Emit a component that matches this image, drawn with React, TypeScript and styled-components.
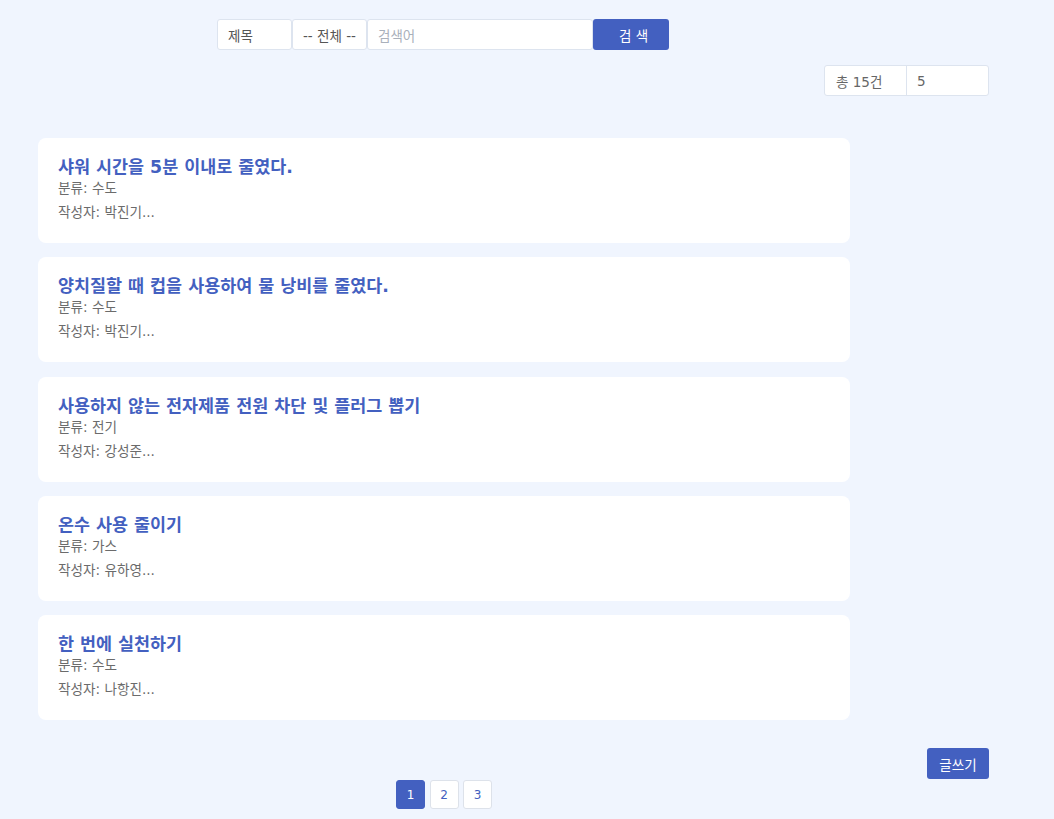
import React from "react";
import styled, { createGlobalStyle } from "styled-components";

const GlobalStyle = createGlobalStyle`
  html, body {
    margin: 0;
    padding: 0;
    background: #f0f5fe;
    font-family: "DejaVu Sans", "Noto Sans CJK KR", sans-serif;
  }
  * { box-sizing: border-box; }
`;

const BLUE = "#4360c0";

const Page = styled.div`
  width: 989px;
  padding: 19px 0 0 38px;
`;

const SearchRow = styled.form`
  width: 812px;
  padding-right: 2px;
  display: flex;
  justify-content: center;
`;

const Cell = styled.div<{ $w: number }>`
  width: ${(p) => p.$w}px;
  height: 31px;
  background: #fff;
  border: 1px solid #dde4ef;
  border-radius: 3px;
  display: flex;
  align-items: center;
  padding-left: 10px;
  font-size: 13.5px;
  color: #555;
`;

const Placeholder = styled.span`
  color: #a9b0bb;
`;

const SearchButton = styled.button`
  width: 76px;
  height: 31px;
  border: none;
  border-radius: 3px;
  background: ${BLUE};
  color: #fff;
  font-family: inherit;
  font-size: 13.5px;
  padding: 0 0 0 5px;
`;

const CountRow = styled.div`
  margin-top: 15px;
  display: flex;
  justify-content: flex-end;
`;

const CountBox = styled.div`
  display: flex;
  background: #fff;
  border: 1px solid #dde4ef;
  border-radius: 3px;
  height: 31px;
`;

const CountCell = styled.div<{ $w: number; $divider?: boolean }>`
  width: ${(p) => p.$w}px;
  display: flex;
  align-items: center;
  padding-left: ${(p) => (p.$divider ? 11 : 10)}px;
  font-size: 13.5px;
  color: #666;
  border-right: ${(p) => (p.$divider ? "1px solid #dde4ef" : "none")};
`;

const CardList = styled.div`
  margin-top: 42px;
  width: 812px;
  display: flex;
  flex-direction: column;
  gap: 14.25px;
`;

const Card = styled.div`
  height: 105px;
  background: #fff;
  border-radius: 8px;
  padding: 18px 20px 0;
`;

const Title = styled.h3`
  margin: 0;
  font-size: 17.4px;
  line-height: 22px;
  font-weight: 700;
  color: ${BLUE};
`;

const Meta = styled.p<{ $gap?: number }>`
  margin: ${(p) => p.$gap ?? 0}px 0 0;
  font-size: 13.6px;
  line-height: 20px;
  color: #6b6b6b;
`;

const WriteRow = styled.div`
  margin-top: 28px;
  display: flex;
  justify-content: flex-end;
`;

const WriteButton = styled.button`
  width: 62px;
  height: 31px;
  border: none;
  border-radius: 3px;
  background: ${BLUE};
  color: #fff;
  font-family: inherit;
  font-size: 13.5px;
  padding: 0;
`;

const Pagination = styled.div`
  width: 812px;
  margin-top: 1px;
  display: flex;
  justify-content: center;
  gap: 4.5px;
`;

const PageButton = styled.button<{ $active?: boolean }>`
  width: 29px;
  height: 29px;
  padding: 0;
  border-radius: 3px;
  border: 1px solid ${(p) => (p.$active ? BLUE : "#dde2ea")};
  background: ${(p) => (p.$active ? BLUE : "#fff")};
  color: ${(p) => (p.$active ? "#fff" : BLUE)};
  font-family: inherit;
  font-size: 12px;
  font-weight: 400;
`;

const posts = [
  { title: "샤워 시간을 5분 이내로 줄였다.", cat: "수도", author: "박진기..." },
  { title: "양치질할 때 컵을 사용하여 물 낭비를 줄였다.", cat: "수도", author: "박진기..." },
  { title: "사용하지 않는 전자제품 전원 차단 및 플러그 뽑기", cat: "전기", author: "강성준..." },
  { title: "온수 사용 줄이기", cat: "가스", author: "유하영..." },
  { title: "한 번에 실천하기", cat: "수도", author: "나항진..." },
];

export default function App() {
  return (
    <>
      <GlobalStyle />
      <Page>
        <SearchRow onSubmit={(e) => e.preventDefault()}>
          <Cell $w={75}>제목</Cell>
          <Cell $w={75}>-- 전체 --</Cell>
          <Cell $w={226}>
            <Placeholder>검색어</Placeholder>
          </Cell>
          <SearchButton type="submit">검 색</SearchButton>
        </SearchRow>
        <CountRow>
          <CountBox>
            <CountCell $w={82} $divider>
              총 15건
            </CountCell>
            <CountCell $w={81}>5</CountCell>
          </CountBox>
        </CountRow>
        <CardList>
          {posts.map((p, i) => (
            <Card key={i}>
              <Title>{p.title}</Title>
              <Meta>분류: {p.cat}</Meta>
              <Meta $gap={4}>작성자: {p.author}</Meta>
            </Card>
          ))}
        </CardList>
        <WriteRow>
          <WriteButton>글쓰기</WriteButton>
        </WriteRow>
        <Pagination>
          <PageButton $active>1</PageButton>
          <PageButton>2</PageButton>
          <PageButton>3</PageButton>
        </Pagination>
      </Page>
    </>
  );
}
